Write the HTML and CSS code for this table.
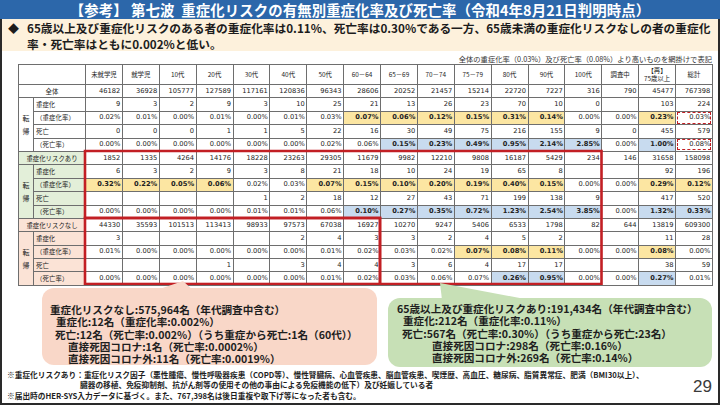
FILE: index.html
```html
<!DOCTYPE html>
<html lang="ja">
<head>
<meta charset="utf-8">
<title>第七波 重症化リスクの有無別重症化率及び死亡率</title>
<link rel="stylesheet" href="styles.css">
</head>
<body>
<div class="page">
  <header class="title">【参考】 第七波&nbsp; 重症化リスクの有無別重症化率及び死亡率（令和4年8月21日判明時点）</header>
  <main class="sheet">
    <div class="lead">
      <span class="dia">◆</span>
      <p>65歳以上及び重症化リスクのある者の重症化率は0.11%、死亡率は0.30%である一方、65歳未満の重症化リスクなしの者の重症化<br>率・死亡率はともに0.002%と低い。</p>
    </div>
    <p class="note">全体の重症化率（0.03%）及び死亡率（0.08%）より高いものを網掛けで表記</p>
    <div class="tablewrap">
      <table class="grid">
        <colgroup>
          <col class="c-a"><col class="c-b">
          <col class="c-d"><col class="c-d"><col class="c-d"><col class="c-d"><col class="c-d"><col class="c-d"><col class="c-d"><col class="c-d"><col class="c-d"><col class="c-d"><col class="c-d"><col class="c-d"><col class="c-d"><col class="c-d"><col class="c-d"><col class="c-d"><col class="c-d">
        </colgroup>
        <thead>
          <tr class="hd"><th colspan="2"></th><th>未就学児</th><th>就学児</th><th>10代</th><th>20代</th><th>30代</th><th>40代</th><th>50代</th><th>60－64</th><th>65－69</th><th>70－74</th><th>75－79</th><th>80代</th><th>90代</th><th>100代</th><th>調査中</th><th>【再】<br>75歳以上</th><th>総計</th></tr>
        </thead>
        <tbody class="g0">
          <tr><th colspan="2" class="sec">全体</th><td>46182</td><td>36928</td><td>105777</td><td>127589</td><td>117161</td><td>120836</td><td>96343</td><td>28606</td><td>20252</td><td>21457</td><td>15214</td><td>22720</td><td>7227</td><td>316</td><td>790</td><td>45477</td><td>767398</td></tr>
          <tr><th rowspan="4" class="tk">転<br>帰</th><th class="lb">重症化</th><td>9</td><td>3</td><td>2</td><td>9</td><td>3</td><td>10</td><td>25</td><td>21</td><td>13</td><td>26</td><td>23</td><td>70</td><td>10</td><td>0</td><td></td><td>103</td><td>224</td></tr>
          <tr><th class="lb pr">（重症化率）</th><td>0.02%</td><td>0.01%</td><td>0.00%</td><td>0.01%</td><td>0.00%</td><td>0.01%</td><td>0.03%</td><td class="y">0.07%</td><td class="y">0.06%</td><td class="y">0.12%</td><td class="y">0.15%</td><td class="y">0.31%</td><td class="y">0.14%</td><td>0.00%</td><td>0.00%</td><td class="y">0.23%</td><td class="dash">0.03%</td></tr>
          <tr><th class="lb">死亡</th><td>0</td><td>0</td><td>0</td><td>1</td><td>1</td><td>5</td><td>22</td><td>16</td><td>30</td><td>49</td><td>75</td><td>216</td><td>155</td><td>9</td><td>0</td><td>455</td><td>579</td></tr>
          <tr><th class="lb pr">（死亡率）</th><td>0.00%</td><td>0.00%</td><td>0.00%</td><td>0.00%</td><td>0.00%</td><td>0.00%</td><td>0.02%</td><td>0.06%</td><td class="b">0.15%</td><td class="b">0.23%</td><td class="b">0.49%</td><td class="b">0.95%</td><td class="b">2.14%</td><td class="b">2.85%</td><td>0.00%</td><td class="b">1.00%</td><td class="dash">0.08%</td></tr>
        </tbody>
        <tbody class="g1">
          <tr><th colspan="2" class="sec">重症化リスクあり</th><td>1852</td><td>1335</td><td>4264</td><td>14176</td><td>18228</td><td>23263</td><td>29305</td><td>11679</td><td>9982</td><td>12210</td><td>9808</td><td>16187</td><td>5429</td><td>234</td><td>146</td><td>31658</td><td>158098</td></tr>
          <tr><th rowspan="4" class="tk">転<br>帰</th><th class="lb">重症化</th><td>6</td><td>3</td><td>2</td><td>9</td><td>3</td><td>8</td><td>21</td><td>18</td><td>10</td><td>24</td><td>19</td><td>65</td><td>8</td><td></td><td></td><td>92</td><td>196</td></tr>
          <tr><th class="lb pr">（重症化率）</th><td class="y">0.32%</td><td class="y">0.22%</td><td class="y">0.05%</td><td class="y">0.06%</td><td>0.02%</td><td>0.03%</td><td class="y">0.07%</td><td class="y">0.15%</td><td class="y">0.10%</td><td class="y">0.20%</td><td class="y">0.19%</td><td class="y">0.40%</td><td class="y">0.15%</td><td>0.00%</td><td>0.00%</td><td class="y">0.29%</td><td class="y">0.12%</td></tr>
          <tr><th class="lb">死亡</th><td></td><td></td><td></td><td></td><td>1</td><td>2</td><td>18</td><td>12</td><td>27</td><td>43</td><td>71</td><td>199</td><td>138</td><td>9</td><td></td><td>417</td><td>520</td></tr>
          <tr><th class="lb pr">（死亡率）</th><td>0.00%</td><td>0.00%</td><td>0.00%</td><td>0.00%</td><td>0.01%</td><td>0.01%</td><td>0.06%</td><td class="b">0.10%</td><td class="b">0.27%</td><td class="b">0.35%</td><td class="b">0.72%</td><td class="b">1.23%</td><td class="b">2.54%</td><td class="b">3.85%</td><td>0.00%</td><td class="b">1.32%</td><td class="b">0.33%</td></tr>
        </tbody>
        <tbody class="g2">
          <tr><th colspan="2" class="sec">重症化リスクなし</th><td>44330</td><td>35593</td><td>101513</td><td>113413</td><td>98933</td><td>97573</td><td>67038</td><td>16927</td><td>10270</td><td>9247</td><td>5406</td><td>6533</td><td>1798</td><td>82</td><td>644</td><td>13819</td><td>609300</td></tr>
          <tr><th rowspan="4" class="tk">転<br>帰</th><th class="lb">重症化</th><td>3</td><td></td><td></td><td></td><td></td><td>2</td><td>4</td><td>3</td><td>3</td><td>2</td><td>4</td><td>5</td><td>2</td><td></td><td></td><td>11</td><td>28</td></tr>
          <tr><th class="lb pr">（重症化率）</th><td>0.01%</td><td>0.00%</td><td>0.00%</td><td>0.00%</td><td>0.00%</td><td>0.00%</td><td>0.01%</td><td>0.02%</td><td>0.03%</td><td>0.02%</td><td class="y">0.07%</td><td class="y">0.08%</td><td class="y">0.11%</td><td>0.00%</td><td>0.00%</td><td class="y">0.08%</td><td>0.00%</td></tr>
          <tr><th class="lb">死亡</th><td></td><td></td><td></td><td>1</td><td></td><td>3</td><td>4</td><td>4</td><td>3</td><td>6</td><td>4</td><td>17</td><td>17</td><td></td><td></td><td>38</td><td>59</td></tr>
          <tr><th class="lb pr">（死亡率）</th><td>0.00%</td><td>0.00%</td><td>0.00%</td><td>0.00%</td><td>0.00%</td><td>0.00%</td><td>0.01%</td><td>0.02%</td><td>0.03%</td><td>0.06%</td><td>0.07%</td><td class="b">0.26%</td><td class="b">0.95%</td><td>0.00%</td><td>0.00%</td><td class="b">0.27%</td><td>0.01%</td></tr>
        </tbody>
      </table>
      <svg class="marks" viewBox="0 0 694 221" preserveAspectRatio="none" aria-hidden="true">
        <path d="M67 87 H583.5 V220 H362 V154 H67 Z" fill="none" stroke="#c21f24" stroke-width="2.6"/>
        <rect x="67" y="154" width="295" height="66" fill="none" stroke="#c21f24" stroke-width="2.6"/>
      </svg>
    </div>
    <div class="callouts">
      <div class="co pink">
        <p class="l0">重症化リスクなし:575,964名（年代調査中含む）</p>
        <p class="l1">重症化:12名（重症化率:0.002%）</p>
        <p class="l2">死亡:12名（死亡率:0.002%）（うち重症から死亡:1名（60代））</p>
        <p class="l3">直接死因コロナ:1名（死亡率:0.0002%）</p>
        <p class="l3">直接死因コロナ外:11名（死亡率:0.0019%）</p>
      </div>
      <div class="co green">
        <p class="l0">65歳以上及び重症化リスクあり:191,434名（年代調査中含む）</p>
        <p class="l1">重症化:212名（重症化率:0.11%）</p>
        <p class="l2">死亡:567名（死亡率:0.30%）（うち重症から死亡:23名）</p>
        <p class="l4">直接死因コロナ:298名（死亡率:0.16%）</p>
        <p class="l4">直接死因コロナ外:269名（死亡率:0.14%）</p>
      </div>
    </div>
    <footer class="foot">
      <div class="notes">
        <p>※重症化リスクあり：重症化リスク因子（悪性腫瘍、慢性呼吸器疾患（COPD等）、慢性腎臓病、心血管疾患、脳血管疾患、喫煙歴、高血圧、糖尿病、脂質異常症、肥満（BMI30以上）、</p>
        <p class="ind">臓器の移植、免疫抑制剤、抗がん剤等の使用その他の事由による免疫機能の低下）及び妊娠している者</p>
        <p>※届出時のHER-SYS入力データに基づく。また、767,398名は後日重複や取下げ等になった者も含む。</p>
      </div>
      <span class="pg">29</span>
    </footer>
  </main>
</div>
</body>
</html>
```
FILE: styles.css
```css
* { box-sizing: border-box; margin: 0; padding: 0; }
html, body { margin: 0; background: #fff; }
body {
  width: 720px;
  height: 405px;
  overflow: hidden;
  font-family: "Noto Sans CJK JP", "Noto Sans", sans-serif;
  color: #1c1c1c;
}
.page {
  width: 720px;
  height: 405px;
  display: flex;
  flex-direction: column;
}
.title {
  height: 19px;
  background: #2c67aa;
  color: #fff;
  font-weight: 700;
  font-size: 14.4px;
  line-height: 19px;
  text-align: center;
  white-space: nowrap;
  letter-spacing: 0.1px;
}
.sheet {
  flex: 1;
  border: 2px solid #2a2a2a;
  border-top: 0;
  display: flex;
  flex-direction: column;
}
.lead {
  height: 32px;
  background: #fdf1dc;
  display: flex;
  padding: 1px 6px 0 6px;
}
.dia {
  width: 19px;
  flex: none;
  font-size: 11px;
  line-height: 16px;
}
.lead p {
  font-size: 11.7px;
  font-weight: 700;
  line-height: 15.5px;
  white-space: nowrap;
  letter-spacing: 0;
}
.note {
  height: 13px;
  padding-top: 4px;
  padding-right: 6px;
  font-size: 7.3px;
  line-height: 9px;
  text-align: right;
  color: #333;
}
.tablewrap {
  position: relative;
  margin-left: 16px;
  width: 694px;
  height: 221px;
}
.grid {
  width: 694px;
  table-layout: fixed;
  border-collapse: collapse;
  font-family: "DejaVu Sans", "Noto Sans CJK JP", sans-serif;
  font-size: 6.7px;
  color: #222;
}
.c-a { width: 15px; }
.c-b { width: 52px; }
.c-d { width: 36.88px; }
.grid th, .grid td {
  border: 1px solid #6e6e6e;
  padding: 0 1.5px 0 0;
  height: 13.4px;
  line-height: 11px;
  white-space: nowrap;
  overflow: hidden;
}
.grid td { text-align: right; }
.grid th {
  font-family: "Noto Sans CJK JP", sans-serif;
  font-weight: 400;
  font-size: 6.4px;
  text-align: left;
}
.hd th {
  height: 20px;
  text-align: center;
  line-height: 8px;
  padding: 0;
}
.grid .sec { text-align: center; padding: 0; }
.grid .tk { text-align: center; padding: 0; line-height: 13px; font-size: 7px; }
.grid .lb { padding-left: 2px; }
.grid .pr { padding-left: 2px; letter-spacing: 0.1px; }
.g1 th { background: #e3efd9; }
.g2 th { background: #fbe3d6; }
.grid .y { background: #fce6a2; font-weight: 700; }
.grid .b { background: #c8dbef; font-weight: 700; }
.grid .dash { outline: 1.6px dashed #c21f24; outline-offset: -2.5px; }
.marks {
  position: absolute;
  left: 0;
  top: 0;
  width: 694px;
  height: 221px;
  pointer-events: none;
}
.callouts {
  height: 83px;
  display: flex;
  align-items: flex-start;
}
.co {
  position: relative;
  font-size: 10.6px;
  font-weight: 700;
  line-height: 12.3px;
  color: #1e1e1e;
  white-space: nowrap;
}
.co p { height: 12.3px; }
.co::before {
  content: "";
  position: absolute;
}
.pink {
  margin-left: 40px;
  margin-top: 3px;
  width: 335px;
  height: 77px;
  background: #f9d7c8;
  border-radius: 12px;
  padding: 16px 0 0 8px;
}
.pink::before {
  left: 100px;
  top: -7px;
  width: 60px;
  height: 12px;
  background: #f9d7c8;
  clip-path: polygon(41px 0, 6px 100%, 54px 100%);
}
.green {
  margin-left: 11px;
  margin-top: 13px;
  width: 324px;
  height: 69px;
  background: #c7e0b6;
  border-radius: 12px;
  padding: 5px 0 0 9px;
}
.green::before {
  left: 50px;
  top: -15px;
  width: 95px;
  height: 17px;
  background: #c7e0b6;
  clip-path: polygon(2px 0, 4px 100%, 92px 100%);
}
.co .l1 { padding-left: 6px; }
.co .l2 { padding-left: 5px; }
.co .l3 { padding-left: 18px; }
.co .l4 { padding-left: 35px; }
.foot {
  flex: 1;
  display: flex;
  justify-content: space-between;
  padding: 2px 6px 0 5px;
}
.notes {
  font-size: 7.7px;
  font-weight: 700;
  line-height: 10.3px;
  color: #1e1e1e;
  white-space: nowrap;
}
.notes .ind { padding-left: 73px; }
.pg {
  font-family: "Liberation Sans", Arial, sans-serif;
  font-size: 17px;
  color: #3a3a3a;
  margin-top: 8px;
  line-height: 17px;
}
```
